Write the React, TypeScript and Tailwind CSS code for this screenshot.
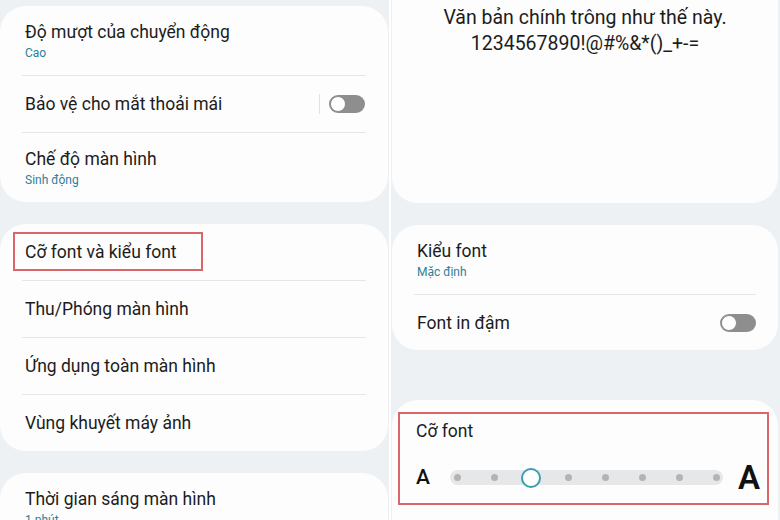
import React from 'react'

const font = { fontFamily: 'Roboto, "Noto Sans", sans-serif' }

function Toggle() {
  return (
    <div className="flex h-[18px] w-[36px] items-center rounded-full bg-[#8e8e8e] pl-[1px]">
      <div className="h-[16px] w-[16px] rounded-full border-[1.5px] border-[#8e8e8e] bg-white" />
    </div>
  )
}

function Divider() {
  return <div className="mx-[22px] h-px bg-[#e4e6e8]" />
}

function Row({ title, sub, right }: { title: string; sub?: string; right?: React.ReactNode }) {
  return (
    <div
      className={`flex shrink-0 items-center justify-between pl-[25px] pr-[23px] ${
        sub ? 'h-[69px]' : 'h-[56px]'
      }`}
    >
      <div className="flex flex-col">
        <span className="text-[17.5px] leading-[22px] text-[#1c1c1c]">{title}</span>
        {sub && <span className="mt-[2px] text-[12px] leading-[16px] text-[#2f7f98]">{sub}</span>}
      </div>
      {right}
    </div>
  )
}

function Slider() {
  const dots = [0, 1, 2, 3, 4, 5, 6, 7]
  return (
    <div className="flex items-center">
      <span className="w-[34px] text-[21px] font-medium leading-none text-[#111]">A</span>
      <div className="flex h-[15px] w-[273px] items-center justify-between rounded-full bg-[#e6e7e8] px-[7px]">
        {dots.map((d) => (
          <div key={d} className="flex w-0 justify-center">
            {d === 2 ? (
              <div className="h-[20px] w-[20px] shrink-0 rounded-full border-2 border-[#3d9db0] bg-white" />
            ) : (
              <div className="h-[7px] w-[7px] shrink-0 rounded-full bg-[#b3b4b5]" />
            )}
          </div>
        ))}
      </div>
      <span className="ml-[15px] text-[33px] font-semibold leading-none text-[#111]">A</span>
    </div>
  )
}

export default function App() {
  return (
    <div className="flex h-[520px] w-[780px] overflow-hidden bg-[#eef1f4]" style={font}>
      {/* left screen */}
      <div className="flex w-[389px] flex-col pt-[6px] pr-[1px]">
        <div className="shrink-0 rounded-[26px] bg-[#fdfdfd]">
          <Row title="Độ mượt của chuyển động" sub="Cao" />
          <Divider />
          <Row
            title="Bảo vệ cho mắt thoải mái"
            right={
              <div className="flex items-center gap-[9px]">
                <div className="h-[20px] w-px bg-[#e2e2e2]" />
                <Toggle />
              </div>
            }
          />
          <Divider />
          <Row title="Chế độ màn hình" sub="Sinh động" />
        </div>

        <div className="mt-[22px] shrink-0 rounded-[26px] bg-[#fdfdfd]">
          <div className="relative">
            <Row title="Cỡ font và kiểu font" />
            <div className="absolute left-[13px] top-[8px] h-[39px] w-[190px] border-2 border-[#d9676a]" />
          </div>
          <Divider />
          <Row title="Thu/Phóng màn hình" />
          <Divider />
          <Row title="Ứng dụng toàn màn hình" />
          <Divider />
          <Row title="Vùng khuyết máy ảnh" />
        </div>

        <div className="mt-[22px] shrink-0 rounded-[26px] bg-[#fdfdfd]">
          <Row title="Thời gian sáng màn hình" sub="1 phút" />
        </div>
      </div>

      <div className="w-[2px] shrink-0 bg-white" />

      {/* right screen */}
      <div className="flex w-[389px] flex-col pl-[1px] pr-[2px]">
        <div className="flex h-[203px] shrink-0 flex-col items-center rounded-b-[26px] bg-[#fdfdfd] pt-[5px] text-[19.5px] leading-[26px] text-[#1c1c1c]">
          <span>Văn bản chính trông như thế này.</span>
          <span>1234567890!@#%&amp;*()_+-=</span>
        </div>

        <div className="mt-[22px] shrink-0 rounded-[26px] bg-[#fdfdfd]">
          <Row title="Kiểu font" sub="Mặc định" />
          <Divider />
          <div className="flex h-[55px] items-center justify-between pl-[25px] pr-[22px]">
            <span className="text-[17.5px] leading-[22px] text-[#1c1c1c]">Font in đậm</span>
            <Toggle />
          </div>
        </div>

        <div className="mt-[50px] h-[200px] shrink-0 rounded-t-[26px] bg-[#fdfdfd] pl-[6px] pr-[9px] pt-[12px]">
          <div className="flex h-[93px] flex-col border-2 border-[#d9676a] pl-[16px] pt-[6px]">
            <span className="text-[17.5px] leading-[22px] text-[#1c1c1c]">Cỡ font</span>
            <div className="mt-[19px]">
              <Slider />
            </div>
          </div>
        </div>
      </div>
    </div>
  )
}
